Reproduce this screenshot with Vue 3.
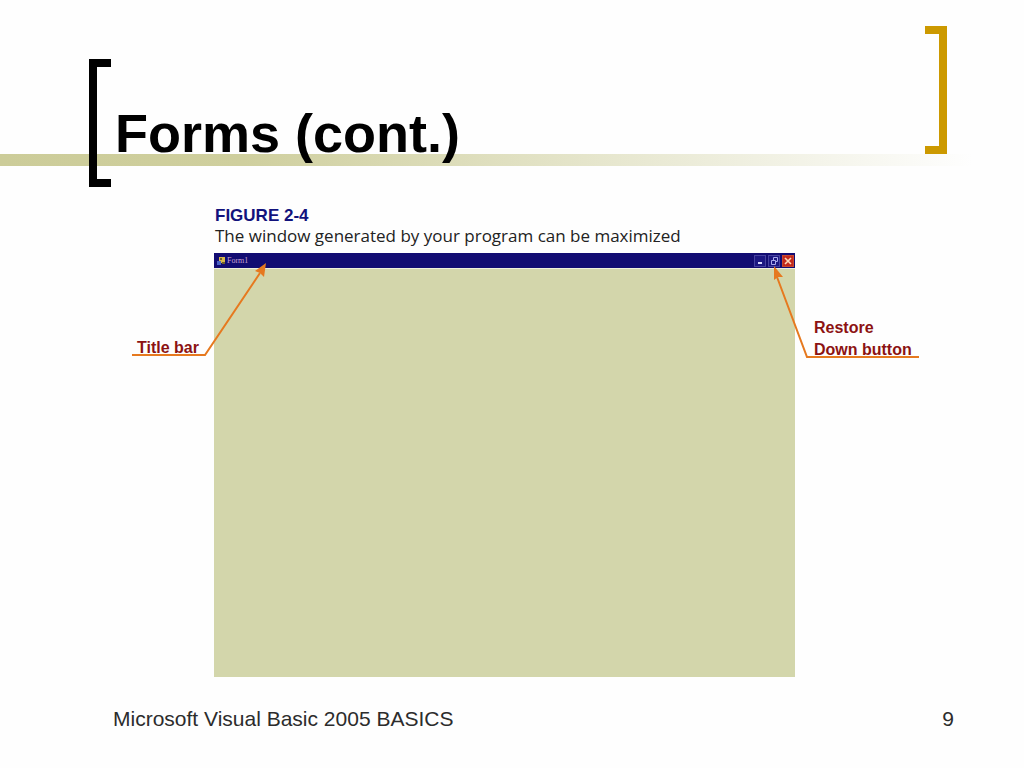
<script setup>
const slide = {
  title: 'Forms (cont.)',
  figure: 'FIGURE 2-4',
  caption: 'The window generated by your program can be maximized',
  footer: 'Microsoft Visual Basic 2005 BASICS',
  page: 9
}
</script>

<template>
  <main class="slide">
    <header class="heading">
      <span class="bracket bracket-open"></span>
      <h1>{{ slide.title }}</h1>
      <span class="bracket bracket-close"></span>
    </header>

    <figure class="figure">
      <figcaption>
        <strong>{{ slide.figure }}</strong>
        <span>{{ slide.caption }}</span>
      </figcaption>
      <p class="label label-left">Title bar</p>
      <section class="window" aria-label="Form1">
        <div class="titlebar">
          <svg class="form-icon" viewBox="0 0 8 8" aria-hidden="true">
            <path d="M2 0h6v6H2z" fill="#d9b84a" />
            <path d="M0 4h4v4H0z" fill="#4a62c4" />
            <path d="M3 1h2v2H3zM5 5h3v2H5z" fill="#70602e" />
          </svg>
          <span class="name">Form1</span>
          <button type="button" aria-label="Minimize">
            <svg viewBox="0 0 10 10"><path d="M3 7h4" stroke="#d6d6ff" stroke-width="2" /></svg>
          </button>
          <button type="button" aria-label="Restore Down">
            <svg viewBox="0 0 10 10"><path d="M4.500 4V1.500h4v4H7M2.500 4.500h4v4h-4z" fill="none" stroke="#a9a9ed" /></svg>
          </button>
          <button type="button" class="close" aria-label="Close">
            <svg viewBox="0 0 10 10"><path d="M2 2l6 6M8 2l-6 6" stroke="#ffd9b8" stroke-width="1.6" /></svg>
          </button>
        </div>
        <svg class="pointer pointer-left" viewBox="0 0 136 96" aria-hidden="true">
          <path d="M0 94H73L128 12" />
          <polygon points="134,2 132,16 128,12 123,10" />
        </svg>
        <svg class="pointer pointer-right" viewBox="0 0 148 96" aria-hidden="true">
          <path d="M148 92H36L6 12" />
          <polygon points="3,1 12,12 7,12 3,15" />
        </svg>
      </section>
      <p class="label label-right">Restore<br />Down button</p>
    </figure>

    <footer>
      <span>{{ slide.footer }}</span>
      <span>{{ slide.page }}</span>
    </footer>
  </main>
</template>

<style>
body {
  margin: 0;
  background: #fefefe;
}
</style>

<style scoped>
.slide {
  min-height: 100vh;
  box-sizing: border-box;
  display: flex;
  flex-direction: column;
  font-family: "Liberation Sans", Arial, sans-serif;
  color: #000;
}

.heading {
  display: flex;
  align-items: flex-end;
  padding: 26px 77px 0 89px;
  background: linear-gradient(90deg, #cccc99 0%, #cfcf9e 25%, #fefefe 100%) no-repeat 0 154px / 95% 12px;
}

.bracket {
  box-sizing: border-box;
  width: 22px;
  height: 128px;
  flex: none;
  border: 8px solid #000;
}

.bracket-open {
  margin-top: 33px;
  border-right: 0;
}

.bracket-close {
  align-self: flex-start;
  border-color: #cc9900;
  border-left: 0;
}

h1 {
  flex: 1;
  margin: 0 0 24px;
  padding-left: 4px;
  font-size: 54px;
  line-height: 60px;
}

.figure {
  flex: 1;
  display: grid;
  grid-template-columns: 82px 1fr 124px;
  grid-template-rows: auto 1fr;
  margin: 19px 105px 0 132px;
}

figcaption {
  grid-column: 2 / 4;
  display: flex;
  flex-direction: column;
  padding-left: 1px;
  margin-bottom: 7px;
  font-size: 17px;
  line-height: 20px;
}

figcaption strong {
  color: #12127c;
}

figcaption span {
  font-family: "Open Sans", "Liberation Sans", sans-serif;
  color: #222;
}

.window {
  position: relative;
  background: #d3d6ab;
}

.titlebar {
  display: flex;
  align-items: center;
  gap: 2px;
  height: 16px;
  padding: 0 1px 0 3px;
  background: #120c72;
  border-bottom: 1px solid #f0f0dc;
  box-sizing: border-box;
}

.form-icon {
  width: 8px;
  height: 8px;
}

.name {
  flex: 1;
  font: 8px "Liberation Serif", serif;
  color: #c9a3d2;
}

.titlebar button {
  width: 12px;
  height: 12px;
  padding: 0;
  border: 1px solid #4742a0;
  background: #1c1782;
  display: flex;
}

.titlebar button svg {
  width: 100%;
  height: 100%;
}

.titlebar .close {
  border-color: #c6492f;
  background: #c4291b;
}

.label {
  margin: 0;
  color: #8c1212;
  font-size: 16px;
  font-weight: bold;
  line-height: 22px;
}

.label-left {
  padding: 84px 0 0 5px;
}

.label-right {
  padding: 64px 0 0 19px;
}

.pointer {
  position: absolute;
  top: 8px;
  height: 96px;
  fill: #e6791f;
}

.pointer path {
  fill: none;
  stroke: #e6791f;
  stroke-width: 2;
}

.pointer-left {
  left: -82px;
  width: 136px;
}

.pointer-right {
  top: 12px;
  right: -124px;
  width: 148px;
}

footer {
  display: flex;
  justify-content: space-between;
  padding: 29px 70px 37px 113px;
  font-size: 21px;
  line-height: 25px;
  color: #2c2c2c;
}
</style>
